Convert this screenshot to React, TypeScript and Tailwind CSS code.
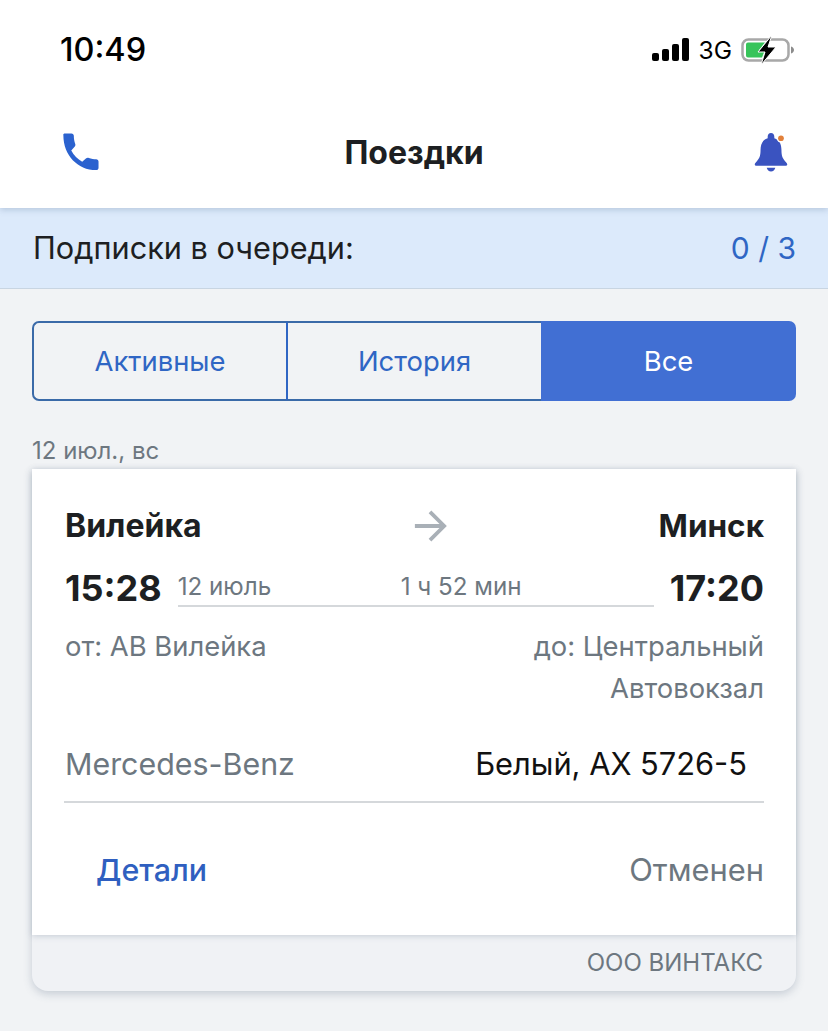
import React from "react";

function Signal() {
  return (
    <svg width="38" height="24" viewBox="0 0 38 24" className="block">
      <rect x="0" y="15" width="7" height="8" rx="2" fill="#000" />
      <rect x="10" y="11" width="7" height="12" rx="2" fill="#000" />
      <rect x="20" y="6" width="7" height="17" rx="2" fill="#000" />
      <rect x="30" y="0" width="7" height="23" rx="2" fill="#000" />
    </svg>
  );
}

function Battery() {
  return (
    <svg width="54" height="30" viewBox="0 0 54 30" className="block">
      <rect x="1.500" y="4.500" width="46" height="21" rx="6" fill="none" stroke="#a8a8a8" strokeWidth="2.500" />
      <path d="M5 9.500a2 2 0 0 1 2-2h17l-6 7.500h6l-3 7.500H7a2 2 0 0 1-2-2z" fill="#37c45a" />
      <path d="M50 11.500c2 .6 3 2 3 3.500s-1 2.900-3 3.500z" fill="#8c8c8c" />
      <path d="M31 0 L17 17 H24 L20 30 L35 12 H27 Z" fill="#000" stroke="#fff" strokeWidth="1" />
    </svg>
  );
}

function Phone() {
  return (
    <svg width="38" height="38" viewBox="0 0 40 40" className="block">
      <path
        d="M2.500 2.500 C2 1 3 .5 4.500 .5 L11 .5 C12.500 .5 13.500 1.500 13.500 3 C13.500 6 14 9 15 11.500 C15.400 12.700 15 13.800 14.300 14.600 L10.800 18.500 C13.500 23.700 17.500 27.700 22.300 30.300 L26.200 26.800 C27 26.100 28.200 25.800 29.300 26.200 C31.800 27 34.800 27.500 37 27.500 C38.500 27.500 39.500 28.500 39.500 30 L39.500 36.500 C39.500 38 38.500 39 37 39 C17.500 39 2.500 23 2.500 2.500 Z"
        fill="#2b62cf"
      />
    </svg>
  );
}

function Bell() {
  return (
    <svg width="38" height="40" viewBox="0 0 40 42" className="block">
      <path
        d="M20 1 C22.200 1 23.500 2.800 23.500 5 L23.500 6.500 C29 8 31 13 31 19 C31 25 32 28 36 32 C37.500 33.500 37.500 35 36 35.500 L4 35.500 C2.500 35 2.500 33.500 4 32 C8 28 9 25 9 19 C9 13 11 8 16.500 6.500 L16.500 5 C16.500 2.800 17.800 1 20 1 Z"
        fill="#3a53c0"
      />
      <path d="M15.500 37.500 H24.500 C24 40 22.200 41.500 20 41.500 C17.800 41.500 16 40 15.500 37.500 Z" fill="#3a53c0" />
      <circle cx="30.500" cy="6.500" r="4.500" fill="#fff" />
      <circle cx="30.500" cy="6.500" r="3" fill="#e2803a" />
    </svg>
  );
}

function Arrow() {
  return (
    <svg width="34" height="34" viewBox="0 0 36 36" className="block">
      <path d="M2 18 H33 M18 3 L33 18 L18 33" fill="none" stroke="#a9b0b7" strokeWidth="4" />
    </svg>
  );
}

export default function App() {
  return (
    <div className="flex h-[1031px] w-[828px] flex-col overflow-hidden bg-[#f1f3f5] font-['Inter',_'Noto_Sans',_sans-serif] text-[#1d1f22]">
      <header className="relative z-10 h-[208px] bg-white shadow-[0_2px_6px_rgba(70,100,140,0.25)]">
        <div className="flex h-[100px] items-center justify-between pl-[60px] pr-[33px]">
          <span className="text-[32.500px] leading-none font-medium text-black">10:49</span>
          <div className="flex items-center gap-[9px]">
            <Signal />
            <span className="text-[24.500px] leading-none text-black">3G</span>
            <Battery />
          </div>
        </div>
        <div className="grid h-[104px] grid-cols-[1fr_auto_1fr] items-center pl-[61px] pr-[38px]">
          <Phone />
          <span className="-ml-[23px] pt-[2px] text-[32px] leading-none font-bold">Поездки</span>
          <span className="justify-self-end"><Bell /></span>
        </div>
      </header>

      <div className="flex h-[81px] items-center justify-between border-b border-[#c8d5e2] bg-[#dceafb] pl-[33px] pr-[32px]">
        <span className="text-[30.700px] leading-none">Подписки в очереди:</span>
        <span className="text-[30px] leading-none text-[#2f66c4]">0 / 3</span>
      </div>

      <div className="flex flex-col px-[32px] pt-[32px]">
        <div className="flex h-[80px] text-[27.400px]">
          <div className="flex w-[254px] items-center justify-center rounded-l-[7px] border-2 border-r-0 border-[#3a6aa8] pt-[1px] text-[#2f66c4]">Активные</div>
          <div className="flex w-[255px] items-center justify-center border-2 border-r-0 border-y-[#3a6aa8] border-l-[#2f66c4] pt-[1px] text-[#2f66c4]">История</div>
          <div className="flex flex-1 items-center justify-center rounded-r-[7px] bg-[#416fd3] pt-[1px] text-white">Все</div>
        </div>

        <div className="mt-[36px] h-[32px] text-[24px] leading-[28px] text-[#6d7780]">12 июл., вс</div>

        <div className="rounded-b-[16px] bg-[#f0f2f5] shadow-[0_3px_8px_rgba(70,90,120,0.25)]">
          <div className="flex h-[466px] flex-col bg-white px-[32px] shadow-[0_1px_6px_rgba(70,90,120,0.25)]">
            <div className="mt-[37px] grid h-[40px] grid-cols-[1fr_auto_1fr] items-center">
              <span className="pl-[1px] text-[32px] leading-none font-bold">Вилейка</span>
              <span className="ml-[32px]"><Arrow /></span>
              <span className="justify-self-end text-[31.500px] leading-none font-bold">Минск</span>
            </div>
            <div className="mt-[21px] flex items-end justify-between pl-[1px]">
              <span className="text-[36px] leading-[42px] font-bold">15:28</span>
              <div className="relative mx-[16px] mb-[2px] flex h-[38px] flex-1 items-center border-b-2 border-[#d5d8db] text-[24.200px] leading-none text-[#6d7780]">
                <span>12 июль</span>
                <span className="absolute left-[223px]">1 ч 52 мин</span>
              </div>
              <span className="text-[36px] leading-[42px] font-bold">17:20</span>
            </div>
            <div className="mt-[16px] flex justify-between pl-[1px] text-[27.400px] leading-[42px] text-[#6d7780]">
              <span>от: АВ Вилейка</span>
              <span className="w-[280px] text-right">до: Центральный Автовокзал</span>
            </div>
            <div className="mt-[18px] flex h-[76px] items-center justify-between border-b-2 border-[#d5d8db] pr-[17px] pl-[1px] leading-none">
              <span className="text-[30.400px] text-[#6d7780]">Mercedes-Benz</span>
              <span className="text-[30.800px] text-[#111]">Белый, АХ 5726-5</span>
            </div>
            <div className="mt-[32px] flex h-[70px] items-center justify-between pl-[32px] leading-none">
              <span className="text-[30.400px] font-medium text-[#2f5fc0]">Детали</span>
              <span className="text-[30.900px] text-[#6d7780]">Отменен</span>
            </div>
          </div>
          <div className="flex h-[56px] items-center justify-end px-[33px] text-[24px] leading-none text-[#6d7780]">ООО ВИНТАКС</div>
        </div>
      </div>
    </div>
  );
}
